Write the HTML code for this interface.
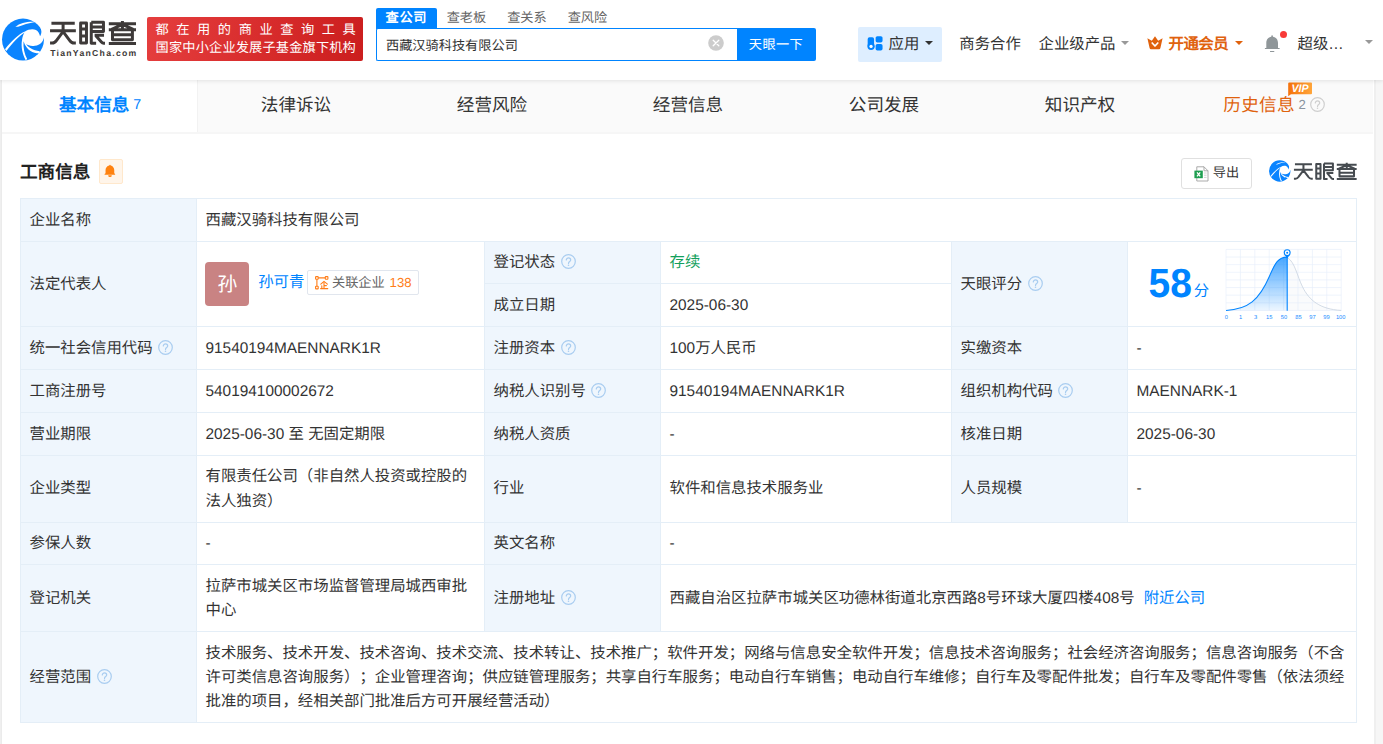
<!DOCTYPE html>
<html lang="zh-CN"><head><meta charset="utf-8"><title>天眼查</title><style>
html,body{margin:0;padding:0}
body{width:1383px;height:744px;overflow:hidden;background:#f6f6f6;font-family:"Liberation Sans",sans-serif;color:#333;position:relative;font-size:15.4px;text-rendering:geometricPrecision;text-spacing-trim:space-all}
.a{position:absolute;white-space:nowrap}
.t{position:absolute;white-space:nowrap;line-height:24px;height:24px}
.q{position:absolute;width:15px;height:15px}
.tri{position:absolute;width:0;height:0;border-left:4px solid transparent;border-right:4px solid transparent;border-top:4.5px solid #333}
</style></head><body>
<div class="a" style="left:0;top:80px;width:2px;height:664px;background:linear-gradient(90deg,#f1f1f1,#e9e9e9)"></div><div class="a" style="left:2px;top:80px;width:1372.3px;height:664px;background:#fff"></div><div class="a" style="left:1374.3px;top:80px;width:1.9px;height:664px;background:#efefef"></div>
<div class="a" style="left:0;top:0;width:1383px;height:80px;background:#fff;box-shadow:0 1px 4px rgba(0,0,0,0.10);z-index:5"></div>
<div class="a" id="hdr" style="left:0;top:0;width:1383px;height:80px;z-index:6">
<svg class="a" style="left:0;top:14px" width="50" height="50" viewBox="0 0 744 744"><circle cx="342" cy="380" r="312" fill="#0a84ff"/>
<path fill="#fff" d="M372 260 C440 218 540 212 574 276 C586 298 592 316 596 332 C616 300 628 250 598 200 L720 200 L720 350 L654 349 C642 410 600 462 520 472 C460 480 415 468 388 448 C420 500 490 542 590 556 L594 584 C500 588 398 548 350 404 C343 500 364 600 406 672 L380 684 C338 600 308 500 328 385 C334 340 350 296 366 276 C285 330 185 432 96 550 L74 524 C165 405 285 292 372 260 Z"/>
<path fill="#fff" d="M228 192 C300 132 420 108 522 118 C430 136 340 160 268 190 C255 190 240 192 228 192Z"/></svg>
<svg class="a" style="left:46px;top:16px" width="96" height="46" viewBox="0 0 1383 663"><g fill="none" stroke="#3e3a39" stroke-width="43" stroke-linejoin="round">
<path d="M78 103H414M58 212H430M246 103V222M246 224L152 350Q124 390 90 390H58M246 224L340 350Q368 390 402 390H430"/>
<path d="M499 100H583V388H499ZM499 187H583M499 288H583"/>
<path d="M652 89V393H722M652 89H828V222H652M652 158H828M700 276H836M716 280L798 376Q812 393 832 393H850"/>
<path d="M905 113H1297M1101 72V188M1101 122L945 192M1101 122L1257 192M905 197H1297M958 197V343H1245V197M958 271H1245M905 396H1297"/>
</g><text x="60" y="578" font-family="Liberation Sans" font-weight="bold" font-size="125" fill="#3e3a39" textLength="1240" lengthAdjust="spacing">TianYanCha.com</text></svg>
<div class="a" style="left:147px;top:17px;width:216px;height:44px;border-radius:2px;background:linear-gradient(100deg,#e53e3e 0%,#d62a2a 60%,#cb1e1e 100%)"></div>
<div class="t" style="left:155.5px;top:10px;font-size:13.2px;color:#fff;line-height:40px;height:40px;letter-spacing:7.6px;">都在用的商业查询工具</div>
<div class="t" style="left:155.6px;top:28px;font-size:13.2px;color:#fff;line-height:40px;height:40px;letter-spacing:0.17px;">国家中小企业发展子基金旗下机构</div>
<div class="a" style="left:376px;top:8px;width:61px;height:21px;background:#0084ff;border-radius:2px 2px 0 0"></div>
<div class="t" style="left:385.6px;top:-2px;font-size:13.2px;color:#fff;line-height:40px;height:40px;font-weight:bold;letter-spacing:0.6px;">查公司</div>
<div class="t" style="left:446.7px;top:-2px;font-size:13.2px;color:#666;line-height:40px;height:40px;">查老板</div>
<div class="t" style="left:507.2px;top:-2px;font-size:13.2px;color:#666;line-height:40px;height:40px;">查关系</div>
<div class="t" style="left:567.7px;top:-2px;font-size:13.2px;color:#666;line-height:40px;height:40px;">查风险</div>
<div class="a" style="left:376px;top:28px;width:362px;height:33px;box-sizing:border-box;border:1.5px solid #0084ff;border-right:none;border-radius:2px 0 0 2px;background:#fff"></div>
<div class="t" style="left:386px;top:26px;font-size:13.2px;color:#333;line-height:40px;height:40px;">西藏汉骑科技有限公司</div>
<svg class="a" style="left:707.8px;top:35.2px" width="16" height="16" viewBox="0 0 16 16"><circle cx="8" cy="8" r="7.8" fill="#ccc"/><path d="M5.2 5.2L10.8 10.8M10.8 5.2L5.2 10.8" stroke="#fff" stroke-width="1.3" stroke-linecap="round"/></svg>
<div class="a" style="left:737px;top:28px;width:79px;height:33px;background:#0084ff;border-radius:0 2px 2px 0"></div>
<div class="t" style="left:748.8px;top:25px;font-size:13.2px;color:#fff;line-height:40px;height:40px;letter-spacing:0.4px;">天眼一下</div>
<div class="a" style="left:858px;top:27px;width:84px;height:35px;border-radius:2px;background:#deeeff"></div>
<svg class="a" style="left:867px;top:36px" width="17" height="15" viewBox="0 0 260 230"><g fill="#0084ff"><rect x="10" y="18" width="98" height="150" rx="28"/><circle cx="62" cy="158" r="56"/><rect x="132" y="2" width="106" height="98" rx="26"/><rect x="132" y="122" width="106" height="100" rx="26"/></g><circle cx="62" cy="160" r="25" fill="#fff"/></svg>
<div class="t" style="left:888.5px;top:25px;font-size:15.4px;color:#333;line-height:40px;height:40px;">应用</div>
<div class="tri" style="left:924.5px;top:41px;border-top-color:#333"></div>
<div class="t" style="left:959.3px;top:25px;font-size:15.4px;color:#333;line-height:40px;height:40px;">商务合作</div>
<div class="t" style="left:1038.5px;top:25px;font-size:15.4px;color:#333;line-height:40px;height:40px;">企业级产品</div>
<div class="tri" style="left:1120.5px;top:41px;border-top-color:#999"></div>
<svg class="a" style="left:1147.1px;top:36px" width="16" height="14" viewBox="0 0 160 140"><path fill="#e0620d" d="M80 2 L112 48 L156 22 L134 120 Q132 132 120 132 L40 132 Q28 132 26 120 L4 22 L48 48 Z"/><path d="M52 70 L80 100 L108 70" fill="none" stroke="#fff" stroke-width="17" stroke-linecap="round" stroke-linejoin="round"/></svg>
<div class="t" style="left:1168.4px;top:25px;font-size:15.4px;color:#e0620d;line-height:40px;height:40px;font-weight:bold;letter-spacing:-0.4px;">开通会员</div>
<div class="tri" style="left:1234.5px;top:41px;border-top-color:#e0620d"></div>
<svg class="a" style="left:1263px;top:34px" width="19" height="20" viewBox="0 0 190 200"><path fill="#8f9699" d="M91 12 C96 12 99 15 99 20 V27 C130 31 150 55 150 90 V140 H166 V151 H19 V140 H33 V90 C33 55 53 31 83 27 V20 C83 15 86 12 91 12 Z"/><rect x="70" y="170" width="43" height="10" rx="3" fill="#8f9699"/></svg>
<div class="a" style="left:1280.2px;top:30.8px;width:7px;height:7px;border-radius:50%;background:#f83a38"></div>
<div class="t" style="left:1297.5px;top:25px;font-size:15.4px;color:#333;line-height:40px;height:40px;">超级…</div>
<div class="tri" style="left:1364.5px;top:40px;border-top-color:#999"></div>
</div>
<div class="a" style="left:2px;top:80px;width:1371px;height:54px;background:#fafafa;border-bottom:2px solid #f6f6f6;box-sizing:border-box"></div>
<div class="a" style="left:2px;top:80px;width:195px;height:52px;background:#fff;border-right:1px solid #f2f2f2"></div>
<div class="t" style="left:59px;top:85px;font-size:17.6px;color:#0084ff;line-height:40px;height:40px;font-weight:bold;">基本信息</div>
<div class="t" style="left:133.3px;top:85px;font-size:14.3px;color:#0084ff;line-height:40px;height:40px;">7</div>
<div class="t" style="left:198px;top:85px;font-size:17.6px;color:#333;line-height:40px;height:40px;width:196px;text-align:center;">法律诉讼</div>
<div class="t" style="left:394px;top:85px;font-size:17.6px;color:#333;line-height:40px;height:40px;width:196px;text-align:center;">经营风险</div>
<div class="t" style="left:590px;top:85px;font-size:17.6px;color:#333;line-height:40px;height:40px;width:196px;text-align:center;">经营信息</div>
<div class="t" style="left:786px;top:85px;font-size:17.6px;color:#333;line-height:40px;height:40px;width:196px;text-align:center;">公司发展</div>
<div class="t" style="left:982px;top:85px;font-size:17.6px;color:#333;line-height:40px;height:40px;width:196px;text-align:center;">知识产权</div>
<div class="t" style="left:1223.3px;top:85px;font-size:17.6px;color:#e0620d;line-height:40px;height:40px;letter-spacing:0.3px;">历史信息</div>
<div class="t" style="left:1298.5px;top:85px;font-size:13.2px;color:#8a94a0;line-height:40px;height:40px;">2</div>
<svg class="q" style="left:1310.3px;top:97.0px" viewBox="0 0 15 15"><circle cx="7.5" cy="7.5" r="6.8" fill="none" stroke="#cfcfcf" stroke-width="1.2"/><path d="M5.3 6 C5.3 3.2 9.7 3.2 9.7 6 C9.7 7.6 7.5 7.6 7.5 9.4" fill="none" stroke="#cfcfcf" stroke-width="1.2" stroke-linecap="round"/><circle cx="7.5" cy="11.3" r="0.8" fill="#cfcfcf"/></svg>
<svg class="a" style="left:1288px;top:81.5px" width="25" height="15" viewBox="0 0 250 150"><defs><linearGradient id="vg" x1="0" y1="0" x2="1" y2="0"><stop offset="0" stop-color="#f5720c"/><stop offset="1" stop-color="#ffa53a"/></linearGradient></defs><path fill="url(#vg)" d="M12 4 H230 Q240 4 240 14 V112 Q240 122 230 122 H30 L2 142 V14 Q2 4 12 4 Z"/><text x="120" y="103" font-family="Liberation Sans" font-weight="bold" font-style="italic" font-size="108" fill="#fff" text-anchor="middle" textLength="172" lengthAdjust="spacingAndGlyphs">VIP</text></svg>
<div class="t" style="left:20px;top:152px;font-size:17.6px;color:#222;line-height:40px;height:40px;font-weight:bold;">工商信息</div>
<div class="a" style="left:99px;top:159px;width:24px;height:25px;box-sizing:border-box;border:1px solid #ffe8cc;border-radius:2px;background:#fff5ea"></div>
<svg class="a" style="left:104.2px;top:164px" width="11.6" height="14" viewBox="0 0 120 140"><path fill="#ff8210" d="M62 5 C66 5 69 8 69 12 C92 17 106 36 106 60 V92 L115 100 V110 H6 V100 L16 92 V60 C16 36 30 17 55 12 C55 8 58 5 62 5 Z M43 113 A19 19 0 0 0 81 113 Z"/></svg>
<div class="a" style="left:1181px;top:158px;width:71px;height:31px;box-sizing:border-box;border:1px solid #e0e0e0;border-radius:3px;background:#fff"></div>
<svg class="a" style="left:1193.5px;top:165.5px" width="15" height="16" viewBox="0 0 150 160"><path d="M28 8 H100 L140 48 V150 H28 Z" fill="#fff" stroke="#a2a2a2" stroke-width="9"/><path d="M100 8 V48 H140" fill="none" stroke="#a2a2a2" stroke-width="9"/><path d="M100 70H126M100 92H126M100 114H126" stroke="#c8c8c8" stroke-width="8"/><rect x="4" y="46" width="84" height="76" fill="#1e9e50"/><path d="M30 64 L62 104 M62 64 L30 104" stroke="#fff" stroke-width="13"/></svg>
<div class="t" style="left:1212.8px;top:153px;font-size:13.2px;color:#333;line-height:40px;height:40px;">导出</div>
<svg class="a" style="left:1267.5px;top:158px" width="25.5" height="25.5" viewBox="0 0 744 744"><circle cx="342" cy="380" r="312" fill="#0a84ff"/>
<path fill="#fff" d="M372 260 C440 218 540 212 574 276 C586 298 592 316 596 332 C616 300 628 250 598 200 L720 200 L720 350 L654 349 C642 410 600 462 520 472 C460 480 415 468 388 448 C420 500 490 542 590 556 L594 584 C500 588 398 548 350 404 C343 500 364 600 406 672 L380 684 C338 600 308 500 328 385 C334 340 350 296 366 276 C285 330 185 432 96 550 L74 524 C165 405 285 292 372 260 Z"/>
<path fill="#fff" d="M228 192 C300 132 420 108 522 118 C430 136 340 160 268 190 C255 190 240 192 228 192Z"/></svg>
<svg class="a" style="left:1290.7px;top:159.2px" width="70" height="24" viewBox="0 0 1383 474"><g fill="none" stroke="#464b50" stroke-width="40" stroke-linejoin="round">
<path d="M78 103H414M58 212H430M246 103V222M246 224L152 350Q124 390 90 390H58M246 224L340 350Q368 390 402 390H430"/>
<path d="M499 100H583V388H499ZM499 187H583M499 288H583"/>
<path d="M652 89V393H722M652 89H828V222H652M652 158H828M700 276H836M716 280L798 376Q812 393 832 393H850"/>
<path d="M905 113H1297M1101 72V188M1101 122L945 192M1101 122L1257 192M905 197H1297M958 197V343H1245V197M958 271H1245M905 396H1297"/>
</g></svg>
<div class="a" style="left:20px;top:198px;width:1337px;height:525px;background:#e4eef7"></div>
<div class="a" style="left:21px;top:199px;width:175px;height:42px;background:#eff6fd"></div>
<div class="t" style="left:29.5px;top:201px;font-size:15.4px;color:#333;line-height:40px;height:40px;">企业名称</div>
<div class="a" style="left:197px;top:199px;width:1159px;height:42px;background:#fff"></div>
<div class="t" style="left:205.5px;top:201px;font-size:15.4px;color:#333;line-height:40px;height:40px;">西藏汉骑科技有限公司</div>
<div class="a" style="left:21px;top:242px;width:175px;height:84px;background:#eff6fd"></div>
<div class="t" style="left:29.5px;top:265px;font-size:15.4px;color:#333;line-height:40px;height:40px;">法定代表人</div>
<div class="a" style="left:197px;top:242px;width:287px;height:84px;background:#fff"></div>
<div class="a" style="left:485px;top:242px;width:175px;height:41px;background:#eff6fd"></div>
<div class="t" style="left:493.5px;top:243px;font-size:15.4px;color:#333;line-height:40px;height:40px;">登记状态</div>
<svg class="q" style="left:560.6px;top:254.2px" viewBox="0 0 15 15"><circle cx="7.5" cy="7.5" r="6.8" fill="none" stroke="#a9cdf0" stroke-width="1.2"/><path d="M5.3 6 C5.3 3.2 9.7 3.2 9.7 6 C9.7 7.6 7.5 7.6 7.5 9.4" fill="none" stroke="#a9cdf0" stroke-width="1.2" stroke-linecap="round"/><circle cx="7.5" cy="11.3" r="0.8" fill="#a9cdf0"/></svg>
<div class="a" style="left:661px;top:242px;width:290px;height:41px;background:#fff"></div>
<div class="t" style="left:669.5px;top:243px;font-size:15.4px;color:#13a05c;line-height:40px;height:40px;">存续</div>
<div class="a" style="left:485px;top:284px;width:175px;height:42px;background:#eff6fd"></div>
<div class="t" style="left:493.5px;top:286px;font-size:15.4px;color:#333;line-height:40px;height:40px;">成立日期</div>
<div class="a" style="left:661px;top:284px;width:290px;height:42px;background:#fff"></div>
<div class="t" style="left:669.5px;top:286px;font-size:15.4px;color:#333;line-height:40px;height:40px;">2025-06-30</div>
<div class="a" style="left:952px;top:242px;width:175px;height:84px;background:#eff6fd"></div>
<div class="t" style="left:960.5px;top:265px;font-size:15.4px;color:#333;line-height:40px;height:40px;">天眼评分</div>
<svg class="q" style="left:1027.6px;top:275.7px" viewBox="0 0 15 15"><circle cx="7.5" cy="7.5" r="6.8" fill="none" stroke="#a9cdf0" stroke-width="1.2"/><path d="M5.3 6 C5.3 3.2 9.7 3.2 9.7 6 C9.7 7.6 7.5 7.6 7.5 9.4" fill="none" stroke="#a9cdf0" stroke-width="1.2" stroke-linecap="round"/><circle cx="7.5" cy="11.3" r="0.8" fill="#a9cdf0"/></svg>
<div class="a" style="left:1128px;top:242px;width:228px;height:84px;background:#fff"></div>
<div class="a" style="left:21px;top:327px;width:175px;height:42px;background:#eff6fd"></div>
<div class="t" style="left:29.5px;top:329px;font-size:15.4px;color:#333;line-height:40px;height:40px;">统一社会信用代码</div>
<svg class="q" style="left:158.2px;top:339.7px" viewBox="0 0 15 15"><circle cx="7.5" cy="7.5" r="6.8" fill="none" stroke="#a9cdf0" stroke-width="1.2"/><path d="M5.3 6 C5.3 3.2 9.7 3.2 9.7 6 C9.7 7.6 7.5 7.6 7.5 9.4" fill="none" stroke="#a9cdf0" stroke-width="1.2" stroke-linecap="round"/><circle cx="7.5" cy="11.3" r="0.8" fill="#a9cdf0"/></svg>
<div class="a" style="left:197px;top:327px;width:287px;height:42px;background:#fff"></div>
<div class="t" style="left:205.5px;top:329px;font-size:15.4px;color:#333;line-height:40px;height:40px;">91540194MAENNARK1R</div>
<div class="a" style="left:485px;top:327px;width:175px;height:42px;background:#eff6fd"></div>
<div class="t" style="left:493.5px;top:329px;font-size:15.4px;color:#333;line-height:40px;height:40px;">注册资本</div>
<svg class="q" style="left:560.6px;top:339.7px" viewBox="0 0 15 15"><circle cx="7.5" cy="7.5" r="6.8" fill="none" stroke="#a9cdf0" stroke-width="1.2"/><path d="M5.3 6 C5.3 3.2 9.7 3.2 9.7 6 C9.7 7.6 7.5 7.6 7.5 9.4" fill="none" stroke="#a9cdf0" stroke-width="1.2" stroke-linecap="round"/><circle cx="7.5" cy="11.3" r="0.8" fill="#a9cdf0"/></svg>
<div class="a" style="left:661px;top:327px;width:290px;height:42px;background:#fff"></div>
<div class="t" style="left:669.5px;top:329px;font-size:15.4px;color:#333;line-height:40px;height:40px;">100万人民币</div>
<div class="a" style="left:952px;top:327px;width:175px;height:42px;background:#eff6fd"></div>
<div class="t" style="left:960.5px;top:329px;font-size:15.4px;color:#333;line-height:40px;height:40px;">实缴资本</div>
<div class="a" style="left:1128px;top:327px;width:228px;height:42px;background:#fff"></div>
<div class="t" style="left:1136.5px;top:329px;font-size:15.4px;color:#333;line-height:40px;height:40px;">-</div>
<div class="a" style="left:21px;top:370px;width:175px;height:42px;background:#eff6fd"></div>
<div class="t" style="left:29.5px;top:372px;font-size:15.4px;color:#333;line-height:40px;height:40px;">工商注册号</div>
<div class="a" style="left:197px;top:370px;width:287px;height:42px;background:#fff"></div>
<div class="t" style="left:205.5px;top:372px;font-size:15.4px;color:#333;line-height:40px;height:40px;">540194100002672</div>
<div class="a" style="left:485px;top:370px;width:175px;height:42px;background:#eff6fd"></div>
<div class="t" style="left:493.5px;top:372px;font-size:15.4px;color:#333;line-height:40px;height:40px;">纳税人识别号</div>
<svg class="q" style="left:591.4px;top:382.7px" viewBox="0 0 15 15"><circle cx="7.5" cy="7.5" r="6.8" fill="none" stroke="#a9cdf0" stroke-width="1.2"/><path d="M5.3 6 C5.3 3.2 9.7 3.2 9.7 6 C9.7 7.6 7.5 7.6 7.5 9.4" fill="none" stroke="#a9cdf0" stroke-width="1.2" stroke-linecap="round"/><circle cx="7.5" cy="11.3" r="0.8" fill="#a9cdf0"/></svg>
<div class="a" style="left:661px;top:370px;width:290px;height:42px;background:#fff"></div>
<div class="t" style="left:669.5px;top:372px;font-size:15.4px;color:#333;line-height:40px;height:40px;">91540194MAENNARK1R</div>
<div class="a" style="left:952px;top:370px;width:175px;height:42px;background:#eff6fd"></div>
<div class="t" style="left:960.5px;top:372px;font-size:15.4px;color:#333;line-height:40px;height:40px;">组织机构代码</div>
<svg class="q" style="left:1058.4px;top:382.7px" viewBox="0 0 15 15"><circle cx="7.5" cy="7.5" r="6.8" fill="none" stroke="#a9cdf0" stroke-width="1.2"/><path d="M5.3 6 C5.3 3.2 9.7 3.2 9.7 6 C9.7 7.6 7.5 7.6 7.5 9.4" fill="none" stroke="#a9cdf0" stroke-width="1.2" stroke-linecap="round"/><circle cx="7.5" cy="11.3" r="0.8" fill="#a9cdf0"/></svg>
<div class="a" style="left:1128px;top:370px;width:228px;height:42px;background:#fff"></div>
<div class="t" style="left:1136.5px;top:372px;font-size:15.4px;color:#333;line-height:40px;height:40px;">MAENNARK-1</div>
<div class="a" style="left:21px;top:413px;width:175px;height:42px;background:#eff6fd"></div>
<div class="t" style="left:29.5px;top:415px;font-size:15.4px;color:#333;line-height:40px;height:40px;">营业期限</div>
<div class="a" style="left:197px;top:413px;width:287px;height:42px;background:#fff"></div>
<div class="t" style="left:205.5px;top:415px;font-size:15.4px;color:#333;line-height:40px;height:40px;">2025-06-30 至 无固定期限</div>
<div class="a" style="left:485px;top:413px;width:175px;height:42px;background:#eff6fd"></div>
<div class="t" style="left:493.5px;top:415px;font-size:15.4px;color:#333;line-height:40px;height:40px;">纳税人资质</div>
<div class="a" style="left:661px;top:413px;width:290px;height:42px;background:#fff"></div>
<div class="t" style="left:669.5px;top:415px;font-size:15.4px;color:#333;line-height:40px;height:40px;">-</div>
<div class="a" style="left:952px;top:413px;width:175px;height:42px;background:#eff6fd"></div>
<div class="t" style="left:960.5px;top:415px;font-size:15.4px;color:#333;line-height:40px;height:40px;">核准日期</div>
<div class="a" style="left:1128px;top:413px;width:228px;height:42px;background:#fff"></div>
<div class="t" style="left:1136.5px;top:415px;font-size:15.4px;color:#333;line-height:40px;height:40px;">2025-06-30</div>
<div class="a" style="left:21px;top:456px;width:175px;height:66px;background:#eff6fd"></div>
<div class="t" style="left:29.5px;top:469px;font-size:15.4px;color:#333;line-height:40px;height:40px;">企业类型</div>
<div class="a" style="left:197px;top:456px;width:287px;height:66px;background:#fff"></div>
<div class="t" style="left:205.5px;top:457px;font-size:15.4px;color:#333;line-height:40px;height:40px;">有限责任公司（非自然人投资或控股的</div>
<div class="t" style="left:205.5px;top:482px;font-size:15.4px;color:#333;line-height:40px;height:40px;">法人独资）</div>
<div class="a" style="left:485px;top:456px;width:175px;height:66px;background:#eff6fd"></div>
<div class="t" style="left:493.5px;top:469px;font-size:15.4px;color:#333;line-height:40px;height:40px;">行业</div>
<div class="a" style="left:661px;top:456px;width:290px;height:66px;background:#fff"></div>
<div class="t" style="left:669.5px;top:469px;font-size:15.4px;color:#333;line-height:40px;height:40px;">软件和信息技术服务业</div>
<div class="a" style="left:952px;top:456px;width:175px;height:66px;background:#eff6fd"></div>
<div class="t" style="left:960.5px;top:469px;font-size:15.4px;color:#333;line-height:40px;height:40px;">人员规模</div>
<div class="a" style="left:1128px;top:456px;width:228px;height:66px;background:#fff"></div>
<div class="t" style="left:1136.5px;top:469px;font-size:15.4px;color:#333;line-height:40px;height:40px;">-</div>
<div class="a" style="left:21px;top:523px;width:175px;height:41px;background:#eff6fd"></div>
<div class="t" style="left:29.5px;top:524px;font-size:15.4px;color:#333;line-height:40px;height:40px;">参保人数</div>
<div class="a" style="left:197px;top:523px;width:287px;height:41px;background:#fff"></div>
<div class="t" style="left:205.5px;top:524px;font-size:15.4px;color:#333;line-height:40px;height:40px;">-</div>
<div class="a" style="left:485px;top:523px;width:175px;height:41px;background:#eff6fd"></div>
<div class="t" style="left:493.5px;top:524px;font-size:15.4px;color:#333;line-height:40px;height:40px;">英文名称</div>
<div class="a" style="left:661px;top:523px;width:695px;height:41px;background:#fff"></div>
<div class="t" style="left:669.5px;top:524px;font-size:15.4px;color:#333;line-height:40px;height:40px;">-</div>
<div class="a" style="left:21px;top:565px;width:175px;height:66px;background:#eff6fd"></div>
<div class="t" style="left:29.5px;top:579px;font-size:15.4px;color:#333;line-height:40px;height:40px;">登记机关</div>
<div class="a" style="left:197px;top:565px;width:287px;height:66px;background:#fff"></div>
<div class="t" style="left:205.5px;top:567px;font-size:15.4px;color:#333;line-height:40px;height:40px;">拉萨市城关区市场监督管理局城西审批</div>
<div class="t" style="left:205.5px;top:591px;font-size:15.4px;color:#333;line-height:40px;height:40px;">中心</div>
<div class="a" style="left:485px;top:565px;width:175px;height:66px;background:#eff6fd"></div>
<div class="t" style="left:493.5px;top:579px;font-size:15.4px;color:#333;line-height:40px;height:40px;">注册地址</div>
<svg class="q" style="left:560.6px;top:589.7px" viewBox="0 0 15 15"><circle cx="7.5" cy="7.5" r="6.8" fill="none" stroke="#a9cdf0" stroke-width="1.2"/><path d="M5.3 6 C5.3 3.2 9.7 3.2 9.7 6 C9.7 7.6 7.5 7.6 7.5 9.4" fill="none" stroke="#a9cdf0" stroke-width="1.2" stroke-linecap="round"/><circle cx="7.5" cy="11.3" r="0.8" fill="#a9cdf0"/></svg>
<div class="a" style="left:661px;top:565px;width:695px;height:66px;background:#fff"></div>
<div class="t" style="left:669.5px;top:579px;font-size:15.4px;color:#333;line-height:40px;height:40px;">西藏自治区拉萨市城关区功德林街道北京西路8号环球大厦四楼408号<span style="color:#0084ff;margin-left:9px">附近公司</span></div>
<div class="a" style="left:21px;top:632px;width:175px;height:90px;background:#eff6fd"></div>
<div class="t" style="left:29.5px;top:658px;font-size:15.4px;color:#333;line-height:40px;height:40px;">经营范围</div>
<svg class="q" style="left:96.6px;top:668.7px" viewBox="0 0 15 15"><circle cx="7.5" cy="7.5" r="6.8" fill="none" stroke="#a9cdf0" stroke-width="1.2"/><path d="M5.3 6 C5.3 3.2 9.7 3.2 9.7 6 C9.7 7.6 7.5 7.6 7.5 9.4" fill="none" stroke="#a9cdf0" stroke-width="1.2" stroke-linecap="round"/><circle cx="7.5" cy="11.3" r="0.8" fill="#a9cdf0"/></svg>
<div class="a" style="left:197px;top:632px;width:1159px;height:90px;background:#fff"></div>
<div class="t" style="left:205.5px;top:634px;font-size:15.4px;color:#333;line-height:40px;height:40px;">技术服务、技术开发、技术咨询、技术交流、技术转让、技术推广；软件开发；网络与信息安全软件开发；信息技术咨询服务；社会经济咨询服务；信息咨询服务（不含</div>
<div class="t" style="left:205.5px;top:658px;font-size:15.4px;color:#333;line-height:40px;height:40px;">许可类信息咨询服务）；企业管理咨询；供应链管理服务；共享自行车服务；电动自行车销售；电动自行车维修；自行车及零配件批发；自行车及零配件零售（依法须经</div>
<div class="t" style="left:205.5px;top:682px;font-size:15.4px;color:#333;line-height:40px;height:40px;">批准的项目，经相关部门批准后方可开展经营活动）</div>
<div class="a" style="left:205px;top:262px;width:44px;height:44px;border-radius:4px;background:#c98383"></div>
<div class="t" style="left:217.4px;top:265px;font-size:19.8px;color:#fff;line-height:40px;height:40px;">孙</div>
<div class="t" style="left:258.2px;top:263px;font-size:15.4px;color:#0084ff;line-height:40px;height:40px;">孙可青</div>
<div class="a" style="left:307px;top:270px;width:112px;height:25px;box-sizing:border-box;border:1px solid #e1e6ee;border-radius:2px;background:#fff"></div>
<svg class="a" style="left:315px;top:276px" width="13.5" height="13.5" viewBox="0 0 135 135"><g fill="none" stroke="#ff7d18" stroke-width="11"><rect x="6" y="6" width="26" height="26" rx="5"/><rect x="103" y="6" width="26" height="26" rx="5"/><rect x="6" y="103" width="26" height="26" rx="5"/><path d="M32 19H103M19 32V103"/></g><g fill="none" stroke="#ff7d18" stroke-width="11" stroke-linecap="round"><path d="M58 82 L90 54 L124 82M90 70V124M90 96H114M68 98V124M56 126H128"/></g></svg>
<div class="t" style="left:332px;top:263px;font-size:13.2px;color:#666;line-height:40px;height:40px;">关联企业<span style="color:#ff7d18;margin-left:4.8px">138</span></div>
<div class="t" style="left:1148.5px;top:264px;font-size:39px;color:#0084ff;line-height:40px;height:40px;font-weight:bold;transform:scaleY(1.04);transform-origin:0 6px;">58</div>
<div class="t" style="left:1193.7px;top:272px;font-size:15.4px;color:#0084ff;line-height:40px;height:40px;">分</div>
<svg class="a" style="left:1215px;top:243px" width="140" height="82" viewBox="0 0 1270 744"><defs><linearGradient id="cg" x1="0" y1="0" x2="0" y2="1"><stop offset="0" stop-color="#0084ff" stop-opacity="0.72"/><stop offset="1" stop-color="#0084ff" stop-opacity="0.07"/></linearGradient></defs><path d="M660 135 C725 175 745 300 795 400 C855 520 950 600 1145 612 L660 612 Z" fill="#fafbfc"/><path d="M100.0 58V612M230.6 58V612M361.2 58V612M491.8 58V612M622.4 58V612M753.0 58V612M883.6 58V612M1014.2 58V612M1144.8 58V612M100 58.0H1145M100 127.2H1145M100 196.5H1145M100 265.8H1145M100 335.0H1145M100 404.2H1145M100 473.5H1145M100 542.8H1145M100 612.0H1145" fill="none" stroke="#e6effb" stroke-width="6"/><path d="M100 612 C300 602 400 520 495 300 C545 180 575 128 655 128 L655 612 Z" fill="url(#cg)"/><path d="M100 612 C300 602 400 520 495 300 C545 180 575 128 655 128" fill="none" stroke="#0084ff" stroke-width="9.5"/><path d="M660 135 C725 175 745 300 795 400 C855 520 950 600 1145 612" fill="none" stroke="#c3cedc" stroke-width="6.5"/><path d="M655 108V614" stroke="#0084ff" stroke-width="10"/><path d="M633 108 L655 140 L677 108 Z" fill="#0084ff"/><circle cx="655" cy="88" r="26.5" fill="#fff" stroke="#0084ff" stroke-width="10"/><circle cx="655" cy="88" r="9" fill="#0084ff"/><text x="103" y="686" font-family="Liberation Sans" font-size="52" fill="#1a8cff" text-anchor="middle">0</text><text x="232" y="686" font-family="Liberation Sans" font-size="52" fill="#1a8cff" text-anchor="middle">1</text><text x="368" y="686" font-family="Liberation Sans" font-size="52" fill="#1a8cff" text-anchor="middle">3</text><text x="492" y="686" font-family="Liberation Sans" font-size="52" fill="#1a8cff" text-anchor="middle">15</text><text x="625" y="686" font-family="Liberation Sans" font-size="52" fill="#1a8cff" text-anchor="middle">50</text><text x="757" y="686" font-family="Liberation Sans" font-size="52" fill="#1a8cff" text-anchor="middle">85</text><text x="885" y="686" font-family="Liberation Sans" font-size="52" fill="#1a8cff" text-anchor="middle">97</text><text x="1012" y="686" font-family="Liberation Sans" font-size="52" fill="#1a8cff" text-anchor="middle">99</text><text x="1140" y="686" font-family="Liberation Sans" font-size="52" fill="#1a8cff" text-anchor="middle">100</text></svg>
</body></html>
